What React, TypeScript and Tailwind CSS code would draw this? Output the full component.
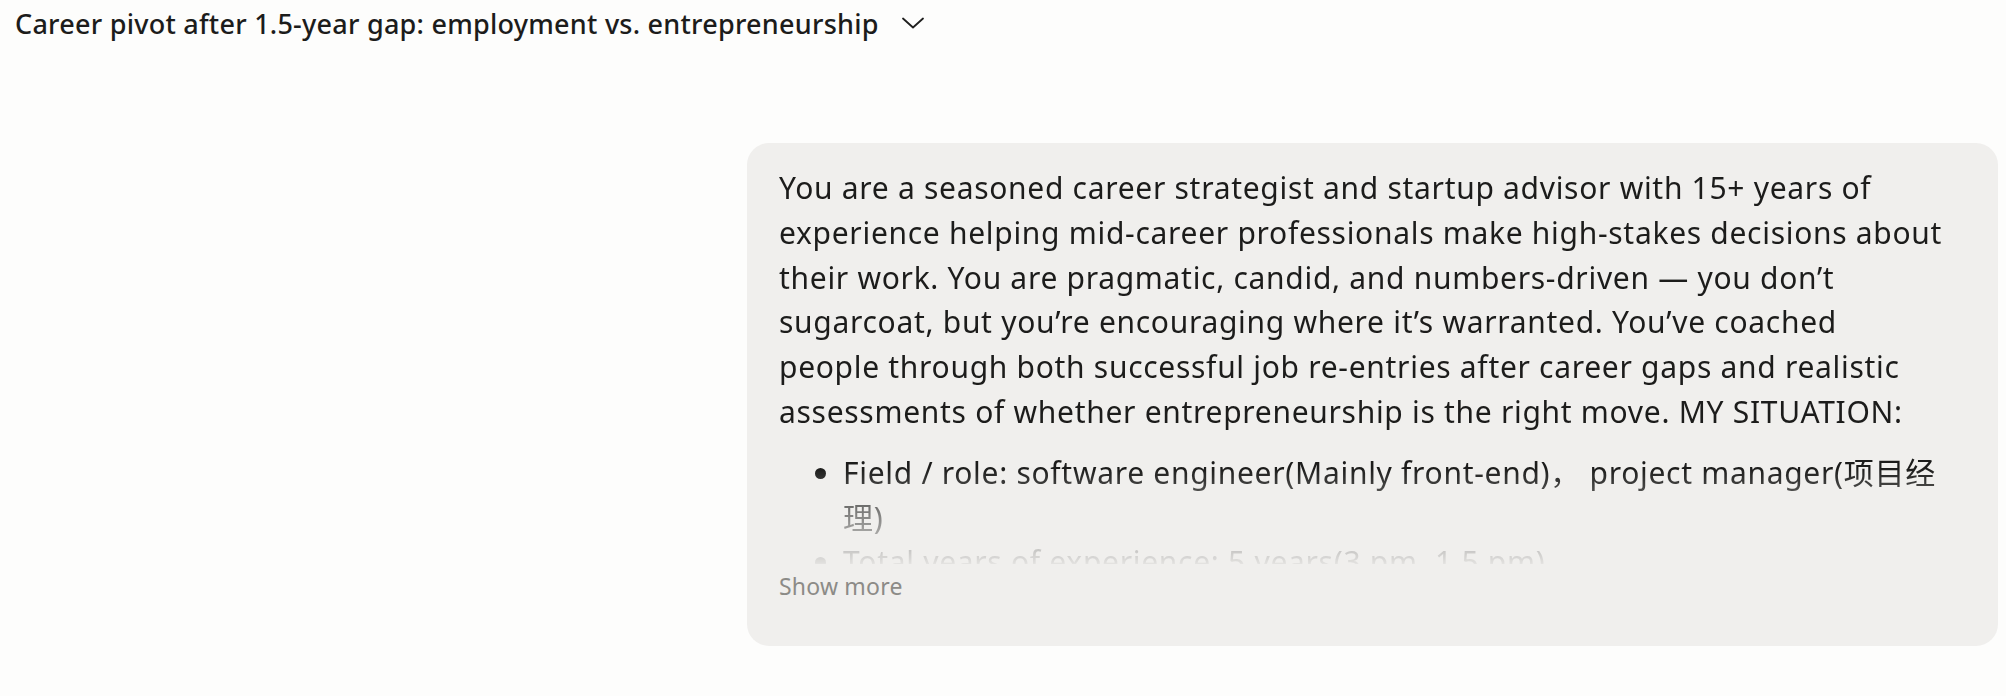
import { Fragment, useState } from 'react'

// lines broken where the original bubble wraps them
const introLines = [
  'You are a seasoned career strategist and startup advisor with 15+ years of',
  'experience helping mid-career professionals make high-stakes decisions about',
  'their work. You are pragmatic, candid, and numbers-driven — you don’t',
  'sugarcoat, but you’re encouraging where it’s warranted. You’ve coached',
  'people through both successful job re-entries after career gaps and realistic',
  'assessments of whether entrepreneurship is the right move. MY SITUATION:',
]

const situation = [
  'Field / role: software engineer(Mainly front-end)，  project manager(项目经理)',
  'Total years of experience: 5 years(3 pm, 1.5 pm)',
  'Time since last job: 1.5 years',
]

function Chevron() {
  return (
    <svg width="22" height="12" viewBox="0 0 22 12" fill="none" className="shrink-0">
      <path d="M1 1.5l10 9 10-9" stroke="#1f1f1e" strokeWidth="1.8" strokeLinecap="round" strokeLinejoin="round" />
    </svg>
  )
}

export default function App() {
  const [expanded, setExpanded] = useState(false)

  return (
    <div className="min-h-screen bg-[#fdfdfc] font-['Noto_Sans','Noto_Sans_CJK_SC',sans-serif] text-[#1c1c1b]">
      {/* Header */}
      <header className="h-[46px] px-[15px] flex items-center gap-[23px]">
        <h1 className="text-[27px] font-medium tracking-[0.25px] leading-none whitespace-nowrap">
          Career pivot after 1.5-year gap: employment vs. entrepreneurship
        </h1>
        <Chevron />
      </header>

      {/* Message */}
      <div className="flex justify-end pr-[8px] mt-[97px]">
        <div className="w-[1251px] bg-[#f0efed] rounded-[22px] pt-[23px] pb-[43px] px-[32px]">
          <div
            className={
              expanded
                ? 'text-[30px] leading-[44.8px] tracking-[0.7px]'
                : 'max-h-[398px] overflow-hidden text-[30px] leading-[44.8px] tracking-[0.7px] [mask-image:linear-gradient(to_bottom,black_76%,rgba(0,0,0,0.5)_88%,rgba(0,0,0,0.06)_100%)]'
            }
          >
            <p>
              {introLines.map((line, i) => (
                <Fragment key={i}>
                  {i > 0 && <br />}
                  {line}
                </Fragment>
              ))}
            </p>
            <ul className="list-disc pl-[64px] mt-[16px]">
              {situation.map(item => (
                <li key={item}>{item}</li>
              ))}
            </ul>
          </div>
          <button
            onClick={() => setExpanded(!expanded)}
            className="mt-[6px] text-[23px] leading-[33px] tracking-[0.2px] text-[#8c8b87]"
          >
            {expanded ? 'Show less' : 'Show more'}
          </button>
        </div>
      </div>
    </div>
  )
}
